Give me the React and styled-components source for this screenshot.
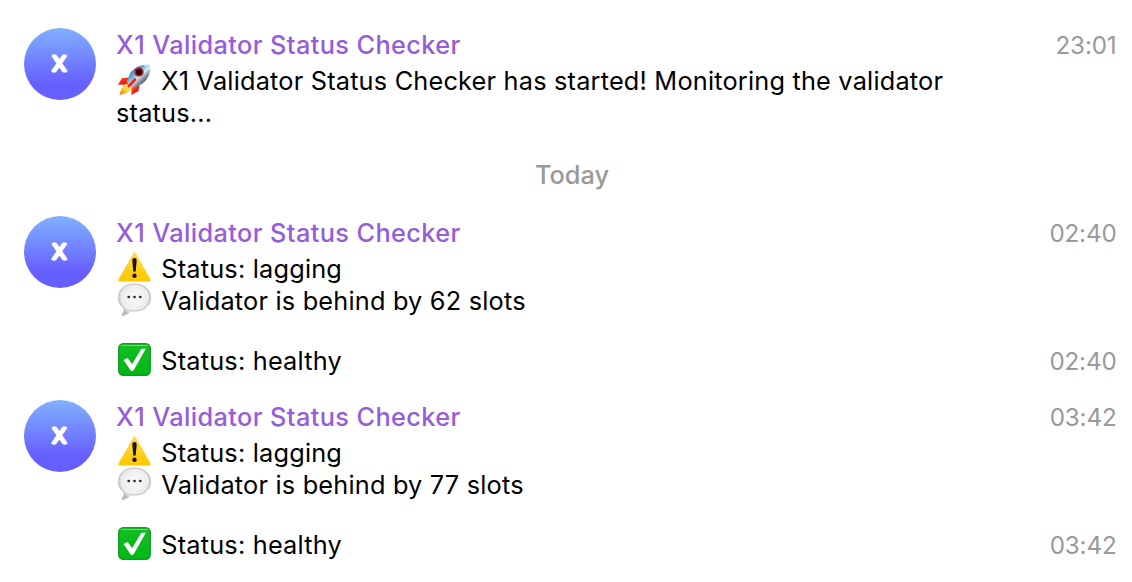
import React from "react";
import styled, { createGlobalStyle } from "styled-components";

const GlobalStyle = createGlobalStyle`
  * { box-sizing: border-box; }
  body {
    margin: 0;
    background: #fff;
    font-family: Inter, "Liberation Sans", sans-serif;
    color: #000;
  }
`;

const Chat = styled.main`
  display: flex;
  flex-direction: column;
  height: 582px;
  padding: 28px 16px 0 24px;
  overflow: hidden;
  font-size: 25.3px;
  line-height: 32px;
`;

const Group = styled.section`
  display: grid;
  grid-template-columns: 72px minmax(0, 1fr);
  column-gap: 20px;
  margin-bottom: ${(p) => p.$gap}px;
`;

const AvatarSvg = styled.svg`
  display: block;
  width: 72px;
  height: 72px;
`;

const Messages = styled.div`
  display: flex;
  flex-direction: column;
  gap: 28px;
  padding-top: 1px;
`;

const Message = styled.article`
  display: flex;
  justify-content: space-between;
`;

const Body = styled.div`
  width: 880px;
`;

const Sender = styled.h2`
  margin: 0 0 4px;
  font-size: 25.3px;
  font-weight: 500;
  letter-spacing: 0.4px;
  color: #955cdb;
`;

const Line = styled.p`
  margin: 0;
  letter-spacing: 0.2px;
`;

const Emoji = styled.svg`
  width: 35px;
  height: 35px;
  margin: -6px 9.3px -6px 1px;
  vertical-align: -1px;
`;

const Time = styled.time`
  height: 32px;
  margin-right: -0.5px;
  padding-top: 1px;
  font-size: 24.2px;
  letter-spacing: -0.15px;
  line-height: 32px;
  color: #999;
`;

const DayLabel = styled.div`
  margin: 2px 0 25px 4px;
  text-align: center;
  font-size: 25.3px;
  font-weight: 500;
  color: #999;
`;

const Avatar = () => (
  <AvatarSvg viewBox="0 0 72 72">
    <defs>
      <linearGradient id="avatar" x1="0" y1="0" x2="0" y2="1">
        <stop offset="0" stopColor="#82b1ff" />
        <stop offset="0.78" stopColor="#665fff" />
        <stop offset="1" stopColor="#665fff" />
      </linearGradient>
    </defs>
    <circle cx="36" cy="36" r="36" fill="url(#avatar)" />
    <text
      transform="translate(35.2 43.200)"
      textAnchor="middle"
      fontFamily="Inter, sans-serif"
      fontSize="20.500"
      fontWeight="400"
      fill="#fff"
      stroke="#fff"
      strokeWidth="2.900"
      strokeLinejoin="round"
    >
      X
    </text>
  </AvatarSvg>
);

const Rocket = () => (
  <Emoji viewBox="0 0 35 35">
    <defs>
      <linearGradient id="hull" gradientUnits="userSpaceOnUse" x1="14" y1="8" x2="27" y2="22">
        <stop offset="0" stopColor="#3f7eb0" />
        <stop offset="0.3" stopColor="#6fabd6" />
        <stop offset="0.55" stopColor="#dcebf3" />
        <stop offset="0.72" stopColor="#94a5b1" />
        <stop offset="1" stopColor="#3c4650" />
      </linearGradient>
      <linearGradient id="fin" x1="0" y1="0" x2="1" y2="1">
        <stop offset="0" stopColor="#ff7044" />
        <stop offset="0.5" stopColor="#f32412" />
        <stop offset="1" stopColor="#b80d08" />
      </linearGradient>
      <linearGradient id="flame" x1="1" y1="0" x2="0" y2="1">
        <stop offset="0" stopColor="#fff5a0" />
        <stop offset="0.55" stopColor="#ffcf2a" />
        <stop offset="1" stopColor="#ef7415" />
      </linearGradient>
    </defs>
    <path d="M13 15.500 5 16 1 22.500l10 .5Z" fill="url(#fin)" />
    <path d="m22.700 22-1.200 7-7.200 4 .2-8Z" fill="url(#fin)" />
    <path d="M9.500 21.500C5.500 23.500 4 27 2.500 33 8 32 13 30.500 15 26Z" fill="url(#flame)" />
    <path d="M33 3C25 1.500 17.500 5 13.500 10.500L9.500 19.500C11 22.500 13.500 25 17 26L25.500 21.500C31 17 34.500 10 33 3Z" fill="url(#hull)" />
    <path d="M27 3c3 .7 5 2.300 5.700 5" fill="none" stroke="#e5f0f6" strokeWidth="1" />
    <path d="m18 17.500-6 6.500" stroke="#ee2a18" strokeWidth="2.800" strokeLinecap="round" />
    <circle cx="22" cy="10" r="3.900" fill="#1d0b10" stroke="#c01f24" strokeWidth="1.700" />
  </Emoji>
);

const Warning = () => (
  <Emoji viewBox="0 0 35 35">
    <defs>
      <linearGradient id="warning" x1="0" y1="0" x2="0" y2="1">
        <stop offset="0" stopColor="#ffd84b" />
        <stop offset="1" stopColor="#ffc800" />
      </linearGradient>
    </defs>
    <path d="M17.500 3.500 32.500 30.200H2.500Z" fill="url(#warning)" stroke="url(#warning)" strokeWidth="2.400" strokeLinejoin="round" />
    <path d="M15.300 10.200c0-3 4.400-3 4.400 0l-.9 10.300c-.1 1.600-2.500 1.600-2.600 0Z" fill="#171400" />
    <circle cx="17.500" cy="25.800" r="2.200" fill="#171400" />
  </Emoji>
);

const Speech = () => (
  <Emoji viewBox="0 0 35 35">
    <defs>
      <radialGradient id="speech" cx="50%" cy="43%" r="56%">
        <stop offset="0" stopColor="#fafafa" />
        <stop offset="0.72" stopColor="#ededed" />
        <stop offset="1" stopColor="#b8b8b8" />
      </radialGradient>
    </defs>
    <path d="M17.500 2C27 2 33.500 7.500 33.500 15.500S27 29 17.500 29c-1.500 0-2.700-.1-4-.4-1.800 2.700-4.500 4.500-8 4.900-.9.100-.8-.7-.2-1.200 1.500-1.500 2-3.600 1.800-6C3.600 23.900 1.500 20.100 1.500 15.700 1.500 7.500 8 2 17.500 2Z" fill="url(#speech)" stroke="#aaa" strokeWidth=".7" />
    <g fill="#222">
      <circle cx="11.700" cy="15" r="1.300" />
      <circle cx="17.500" cy="15" r="1.300" />
      <circle cx="23.300" cy="15" r="1.300" />
    </g>
  </Emoji>
);

const Check = () => (
  <Emoji viewBox="0 0 35 35">
    <defs>
      <linearGradient id="check" x1="0" y1="0" x2="0" y2="1">
        <stop offset="0" stopColor="#16bd23" />
        <stop offset="1" stopColor="#00b815" />
      </linearGradient>
    </defs>
    <rect x="1.700" y="1.700" width="31.600" height="31.600" rx="4.500" fill="url(#check)" stroke="#16992b" strokeWidth="1.300" />
    <path d="M4 3.500h27" stroke="#67dc70" strokeWidth="1" strokeLinecap="round" />
    <path d="m6.500 18 4.200-2 4.400 6.300L24.400 6.800H28.800L16.400 28.700h-2.500Z" fill="#fff" />
  </Emoji>
);

const Incident = ({ time, slots, gap }) => (
  <Group $gap={gap}>
    <Avatar />
    <Messages>
      <Message>
        <Body>
          <Sender>X1 Validator Status Checker</Sender>
          <Line><Warning />Status: lagging</Line>
          <Line><Speech />Validator is behind by {slots} slots</Line>
        </Body>
        <Time>{time}</Time>
      </Message>
      <Message>
        <Body>
          <Line><Check />Status: healthy</Line>
        </Body>
        <Time>{time}</Time>
      </Message>
    </Messages>
  </Group>
);

export default function App() {
  return (
    <>
      <GlobalStyle />
      <Chat>
        <Group $gap={28}>
          <Avatar />
          <Messages>
            <Message>
              <Body>
                <Sender>X1 Validator Status Checker</Sender>
                <Line><Rocket />X1 Validator Status Checker has started! Monitoring the validator status...</Line>
              </Body>
              <Time>23:01</Time>
            </Message>
          </Messages>
        </Group>
        <DayLabel>Today</DayLabel>
        <Incident time="02:40" slots={62} gap={23} />
        <Incident time="03:42" slots={77} gap={0} />
      </Chat>
    </>
  );
}
